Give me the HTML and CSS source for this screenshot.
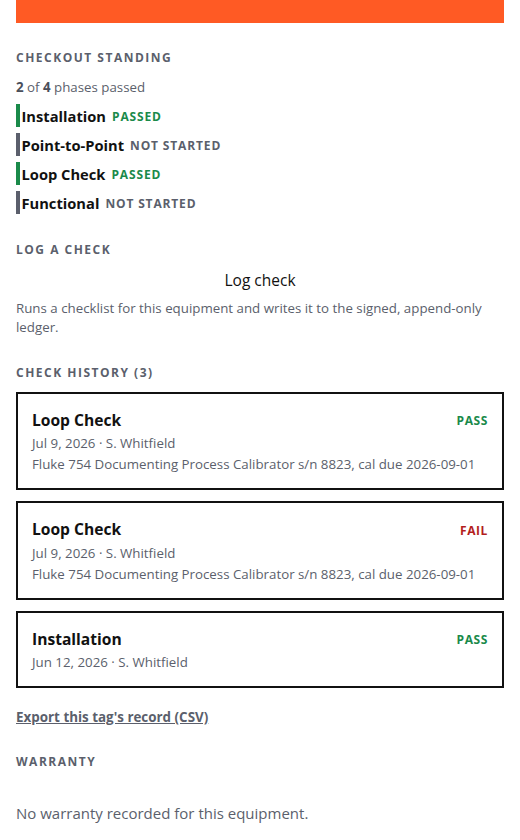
FILE: index.html
```html
<!DOCTYPE html>
<html>
<head>
<meta charset="utf-8">
<link rel="stylesheet" href="styles.css">
</head>
<body>
<div class="page">
  <div class="topbar"></div>

  <h2 class="section-title first">Checkout standing</h2>
  <p class="summary"><b>2</b> of <b>4</b> phases passed</p>
  <ul class="phases">
    <li class="phase ok"><span class="pname">Installation</span> <span class="pstat">Passed</span></li>
    <li class="phase todo"><span class="pname">Point-to-Point</span> <span class="pstat">Not started</span></li>
    <li class="phase ok"><span class="pname">Loop Check</span> <span class="pstat">Passed</span></li>
    <li class="phase todo"><span class="pname">Functional</span> <span class="pstat">Not started</span></li>
  </ul>

  <h2 class="section-title log">Log a check</h2>
  <button class="log-btn">Log check</button>
  <p class="desc">Runs a checklist for this equipment and writes it to the signed, append-only ledger.</p>

  <h2 class="section-title hist">Check history (3)</h2>
  <div class="history">
    <div class="card">
      <div class="card-head"><span class="ctitle">Loop Check</span><span class="result pass">Pass</span></div>
      <div class="meta">Jul 9, 2026 · S. Whitfield</div>
      <div class="meta">Fluke 754 Documenting Process Calibrator s/n 8823, cal due 2026-09-01</div>
    </div>
    <div class="card">
      <div class="card-head"><span class="ctitle">Loop Check</span><span class="result fail">Fail</span></div>
      <div class="meta">Jul 9, 2026 · S. Whitfield</div>
      <div class="meta">Fluke 754 Documenting Process Calibrator s/n 8823, cal due 2026-09-01</div>
    </div>
    <div class="card">
      <div class="card-head"><span class="ctitle">Installation</span><span class="result pass">Pass</span></div>
      <div class="meta">Jun 12, 2026 · S. Whitfield</div>
    </div>
  </div>

  <a class="export" href="#">Export this tag's record (CSV)</a>

  <h2 class="section-title warr">Warranty</h2>
  <p class="empty">No warranty recorded for this equipment.</p>
</div>
</body>
</html>
```

FILE: styles.css
```css
* { box-sizing: border-box; }
html, body { margin: 0; padding: 0; background: #fff; }
body { font-family: "Open Sans", "Noto Sans", sans-serif; color: #111; }
.page { padding: 0 16px; display: flex; flex-direction: column; }
.topbar { height: 23px; background: #ff5a24; }

.section-title {
  margin: 0;
  font-size: 12px;
  font-weight: 700;
  letter-spacing: 1.5px;
  text-transform: uppercase;
  color: #5b5f6c;
  line-height: 16px;
  margin-top: 26.5px;
}
.section-title.first { margin-top: 27px; }
.section-title.log { margin-top: 28px; }
.section-title.hist { margin-top: 27.5px; }
.section-title.warr { margin-top: 27.5px; }

.summary { margin: 12px 0 0; font-size: 13.3px; line-height: 18px; color: #5b5f6c; }
.summary b { color: #4a4e5a; }

.phases { list-style: none; margin: 8px 0 0; padding: 0; display: flex; flex-direction: column; gap: 6px; }
.phase { display: flex; align-items: center; gap: 6px; height: 23px; border-left: 4px solid #5b5f6c; padding-left: 1.5px; }
.phase.ok { border-left-color: #1a8a4a; }
.pname { font-size: 14.7px; font-weight: 700; color: #111; }
.pstat { font-size: 12px; font-weight: 700; text-transform: uppercase; letter-spacing: 0.85px; margin-top: 2px; }
.phase.ok .pstat { color: #1a8a4a; }
.phase.todo .pstat { color: #5b5f6c; }

.log-btn {
  margin: 12px 0 0;
  padding: 0;
  border: 0;
  background: none;
  font-family: inherit;
  font-size: 15.5px;
  color: #111;
  line-height: 20px;
  text-align: center;
}
.desc { margin: 9px 0 0; font-size: 13.3px; line-height: 19px; color: #5b5f6c; }

.history { display: flex; flex-direction: column; gap: 11px; margin-top: 11px; }
.card { border: 2px solid #111; padding: 16px 14px 13px; }
.card-head { display: flex; justify-content: space-between; align-items: center; height: 20px; }
.ctitle { font-size: 15.6px; font-weight: 700; color: #111; line-height: 20px; }
.result { font-size: 12px; font-weight: 700; letter-spacing: 0.6px; text-transform: uppercase; margin-top: 2px; }
.result.pass { color: #1a8a4a; }
.result.fail { color: #b31d1d; }
.meta { font-size: 13.3px; line-height: 21px; color: #5b5f6c; }
.card-head + .meta { margin-top: 3.5px; }

.export { margin-top: 20px; font-size: 13.4px; font-weight: 700; color: #5b5f6c; text-decoration: underline; align-self: flex-start; }

.empty { margin: 33px 0 0; font-size: 15px; color: #5b5f6c; }
```
